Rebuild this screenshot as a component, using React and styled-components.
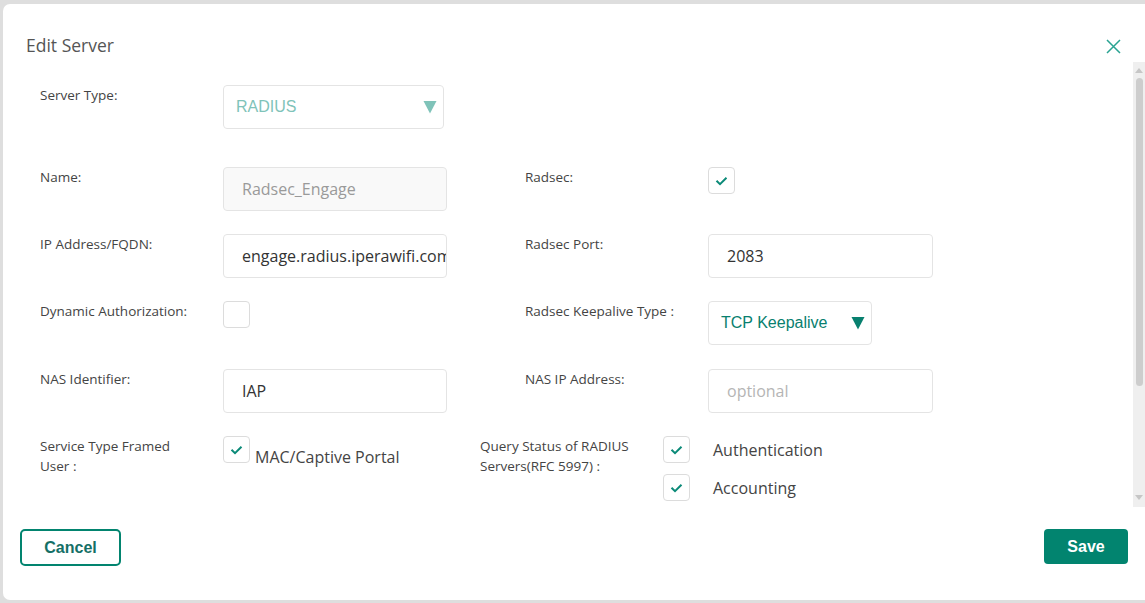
import React from 'react';
import styled, { createGlobalStyle } from 'styled-components';

const GlobalStyle = createGlobalStyle`
  html, body {
    margin: 0;
    padding: 0;
    background: #dedede;
    font-family: "Open Sans", "Liberation Sans", sans-serif;
  }
  * { box-sizing: border-box; }
`;

const teal = '#02846f';

const Modal = styled.div`
  margin: 4px 0 0 3px;
  height: 596px;
  background: #fff;
  border-radius: 7px 0 0 7px;
  display: flex;
  flex-direction: column;
  overflow: hidden;
`;

const Header = styled.div`
  height: 58px;
  padding: 29px 24px 0 23px;
  display: flex;
  justify-content: space-between;
  align-items: flex-start;
`;

const Title = styled.h2`
  margin: 0;
  font-size: 17.5px;
  line-height: 24px;
  font-weight: 400;
  color: #555;
`;

const Close = styled.button`
  border: none;
  background: none;
  padding: 0;
  margin-top: 6px;
  width: 15px;
  height: 15px;
  cursor: pointer;
`;

const Body = styled.div`
  height: 445px;
  display: flex;
`;

const Content = styled.div`
  flex: 1;
  overflow: hidden;
  padding: 23px 0 0 37px;
`;

const ScrollTrack = styled.div`
  width: 12px;
  background: #efefef;
  display: flex;
  flex-direction: column;
  align-items: center;
  padding: 4px 0 4px;
`;

const ScrollArrow = styled.span`
  width: 0;
  height: 0;
  border-left: 4px solid transparent;
  border-right: 4px solid transparent;
  ${p => (p.down
    ? 'border-top: 5px solid #c6c6c6; margin-top: auto; margin-bottom: 3px;'
    : 'border-bottom: 5px solid #c6c6c6; margin-top: 2px;')}
`;

const ScrollThumb = styled.span`
  width: 7px;
  height: 308px;
  margin-top: 5px;
  border-radius: 4px;
  background: #cdcdcd;
`;

const FormRow = styled.div`
  display: flex;
  align-items: flex-start;
  margin-bottom: ${p => p.gap || 23}px;
`;

const Half = styled.div`
  display: flex;
  align-items: flex-start;
  flex-shrink: 0;
  width: ${p => (p.width ? `${p.width}px` : 'auto')};
  padding-left: ${p => p.inset || 0}px;
`;

const Label = styled.div`
  width: 183px;
  flex-shrink: 0;
  font-size: 13.5px;
  line-height: 20px;
  color: #444;
`;

const TextInput = styled.input`
  width: ${p => p.w || 224}px;
  height: 44px;
  padding: 0 0 0 18px;
  border: 1px solid #e4e4e4;
  border-radius: 4px;
  font-family: "Open Sans", sans-serif;
  font-size: 16px;
  color: #333;
  background: #fff;
  outline: none;

  &:disabled {
    background: #f9f9f9;
    color: #9a9a9a;
  }
  &::placeholder { color: #b5b5b5; }
`;

const Select = styled.div`
  width: ${p => p.w}px;
  height: 44px;
  padding: 0 6px 0 12px;
  border: 1px solid #e4e4e4;
  border-radius: 4px;
  display: flex;
  align-items: center;
  justify-content: space-between;
  font-family: "Liberation Sans", Arial, sans-serif;
  font-size: 16px;
  color: ${p => p.color};
`;

const Box = styled.span`
  width: 27px;
  height: 27px;
  flex-shrink: 0;
  border: 1px solid #dcdcdc;
  border-radius: 4px;
  display: inline-flex;
  align-items: center;
  justify-content: center;
  background: #fff;
`;

const CheckLine = styled.div`
  display: flex;
  align-items: ${p => p.align || 'center'};
  gap: ${p => p.spacing || 23}px;
  font-size: 16px;
  color: #444;
  margin-bottom: ${p => p.below || 0}px;
`;

const CheckText = styled.span`
  line-height: 22px;
  padding-top: ${p => p.drop || 0}px;
`;

const Stack = styled.div`
  display: flex;
  flex-direction: column;
`;

const Footer = styled.div`
  flex: 1;
  padding: 22px 17px 0 17px;
  display: flex;
  justify-content: space-between;
  align-items: flex-start;
`;

const OutlineButton = styled.button`
  width: 101px;
  height: 37px;
  border: 2px solid ${teal};
  border-radius: 5px;
  background: #fff;
  color: #156f66;
  font-family: "Liberation Sans", Arial, sans-serif;
  font-size: 16px;
  font-weight: 700;
  cursor: pointer;
`;

const PrimaryButton = styled.button`
  width: 84px;
  height: 35px;
  border: none;
  border-radius: 4px;
  background: ${teal};
  color: #fff;
  font-family: "Liberation Sans", Arial, sans-serif;
  font-size: 16px;
  font-weight: 700;
  cursor: pointer;
`;

function Check({ on }) {
  return (
    <Box>
      {on && (
        <svg width="13" height="10" viewBox="0 0 13 10">
          <path d="M1.5 4.8 L5 8.2 L11.5 1.8" fill="none" stroke="#0b8a78" strokeWidth="2" />
        </svg>
      )}
    </Box>
  );
}

function Triangle({ color }) {
  return (
    <svg width="14" height="14" viewBox="0 0 14 14">
      <path d="M0.5 1 H13.5 L7 13.5 Z" fill={color} />
    </svg>
  );
}

export default function App() {
  return (
    <>
      <GlobalStyle />
      <Modal>
        <Header>
          <Title>Edit Server</Title>
          <Close aria-label="close">
            <svg width="15" height="15" viewBox="0 0 15 15">
              <path d="M1 1 L14 14 M14 1 L1 14" stroke="#2aa392" strokeWidth="1.5" />
            </svg>
          </Close>
        </Header>
        <Body>
          <Content>
            <FormRow gap={38}>
              <Half width={440}>
                <Label>Server Type:</Label>
                <Select w={221} color="#7fc3b9">
                  RADIUS
                  <Triangle color="#7fc3b9" />
                </Select>
              </Half>
            </FormRow>

            <FormRow>
              <Half width={440}>
                <Label>Name:</Label>
                <TextInput disabled defaultValue="Radsec_Engage" />
              </Half>
              <Half inset={45}>
                <Label>Radsec:</Label>
                <Check on />
              </Half>
            </FormRow>

            <FormRow>
              <Half width={440}>
                <Label>IP Address/FQDN:</Label>
                <TextInput defaultValue="engage.radius.iperawifi.com" />
              </Half>
              <Half inset={45}>
                <Label>Radsec Port:</Label>
                <TextInput w={225} defaultValue="2083" />
              </Half>
            </FormRow>

            <FormRow gap={24}>
              <Half width={440}>
                <Label>Dynamic Authorization:</Label>
                <Check />
              </Half>
              <Half inset={45}>
                <Label>Radsec Keepalive Type :</Label>
                <Select w={164} color="#08806f">
                  TCP Keepalive
                  <Triangle color="#08806f" />
                </Select>
              </Half>
            </FormRow>

            <FormRow>
              <Half width={440}>
                <Label>NAS Identifier:</Label>
                <TextInput defaultValue="IAP" />
              </Half>
              <Half inset={45}>
                <Label>NAS IP Address:</Label>
                <TextInput w={225} placeholder="optional" />
              </Half>
            </FormRow>

            <FormRow>
              <Half width={440}>
                <Label>Service Type Framed<br />User :</Label>
                <CheckLine align="flex-start" spacing={5}>
                  <Check on />
                  <CheckText drop={10}>MAC/Captive Portal</CheckText>
                </CheckLine>
              </Half>
              <Half>
                <Label>Query Status of RADIUS<br />Servers(RFC 5997) :</Label>
                <Stack>
                  <CheckLine below={11}>
                    <Check on />
                    <CheckText>Authentication</CheckText>
                  </CheckLine>
                  <CheckLine>
                    <Check on />
                    <CheckText>Accounting</CheckText>
                  </CheckLine>
                </Stack>
              </Half>
            </FormRow>
          </Content>
          <ScrollTrack>
            <ScrollArrow />
            <ScrollThumb />
            <ScrollArrow down />
          </ScrollTrack>
        </Body>
        <Footer>
          <OutlineButton>Cancel</OutlineButton>
          <PrimaryButton>Save</PrimaryButton>
        </Footer>
      </Modal>
    </>
  );
}
